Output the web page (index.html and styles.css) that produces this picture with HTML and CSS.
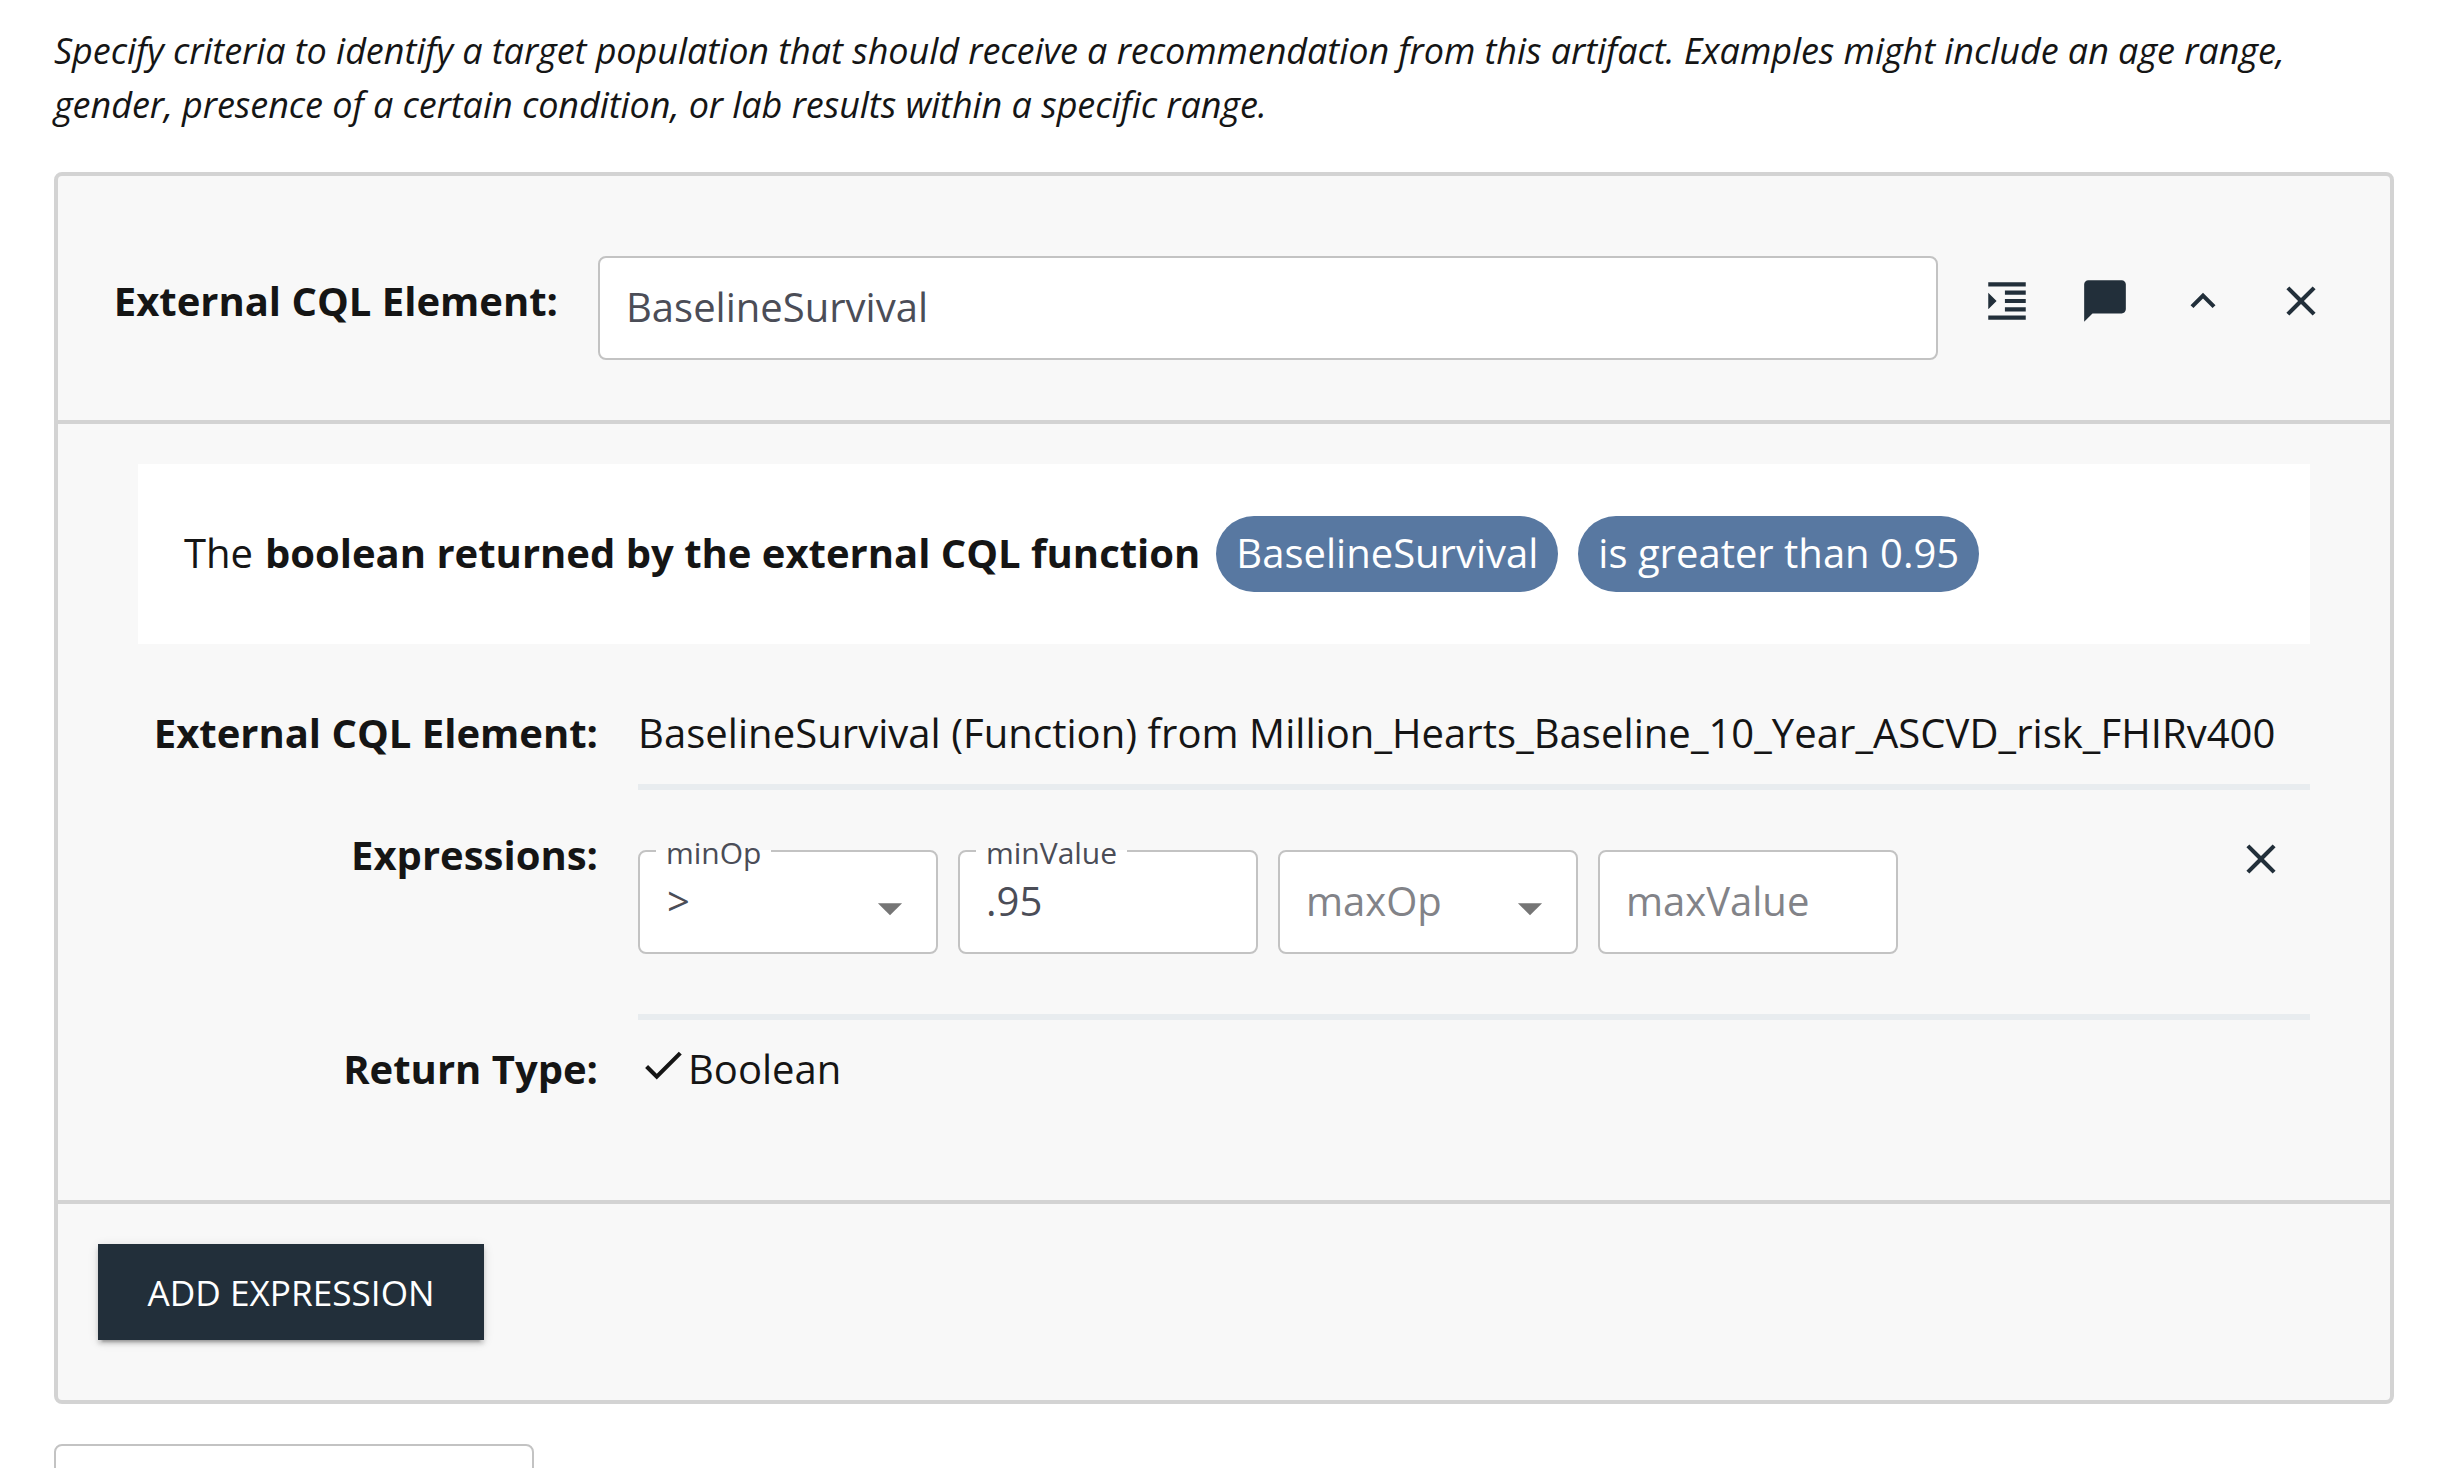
FILE: index.html
```html
<!DOCTYPE html>
<html lang="en">
<head>
<meta charset="utf-8">
<title>Inclusions</title>
<link rel="stylesheet" href="styles.css">
</head>
<body>
<main class="page">
  <p class="intro">Specify criteria to identify a target population that should receive a recommendation from this artifact. Examples might include an age range, gender, presence of a certain condition, or lab results within a specific range.</p>

  <section class="card">
    <header class="card-header">
      <div class="header-label">External CQL Element:</div>
      <div class="field name-field"><span class="value">BaselineSurvival</span></div>
      <div class="actions">
        <span class="icon-button"><svg class="icon" viewBox="0 0 24 24"><path d="M3 21h18v-2H3v2zM3 8v8l4-4-4-4zm8 9h10v-2H11v2zM3 3v2h18V3H3zm8 6h10V7H11v2zm0 4h10v-2H11v2z"/></svg></span>
        <span class="icon-button"><svg class="icon" viewBox="0 0 24 24"><path d="M20 2H4c-1.1 0-2 .9-2 2v18l4-4h14c1.1 0 2-.9 2-2V4c0-1.1-.9-2-2-2z"/></svg></span>
        <span class="icon-button"><svg class="icon" viewBox="0 0 24 24"><path d="M12 8l-6 6 1.41 1.41L12 10.83l4.59 4.58L18 14z"/></svg></span>
        <span class="icon-button"><svg class="icon" viewBox="0 0 24 24"><path d="M19 6.41L17.59 5 12 10.59 6.41 5 5 6.41 10.59 12 5 17.59 6.41 19 12 13.41 17.59 19 19 17.59 13.41 12z"/></svg></span>
      </div>
    </header>

    <div class="card-body">
      <div class="phrase">
        <span class="phrase-text">The <b>boolean returned by the external CQL function</b></span>
        <span class="pill">BaselineSurvival</span>
        <span class="pill">is greater than 0.95</span>
      </div>

      <div class="row element-row">
        <div class="row-label">External CQL Element:</div>
        <div class="row-content">BaselineSurvival (Function) from Million_Hearts_Baseline_10_Year_ASCVD_risk_FHIRv400</div>
      </div>

      <div class="row expressions-row">
        <div class="row-label">Expressions:</div>
        <div class="row-content expression">
          <div class="fields">
            <div class="field small"><span class="field-label">minOp</span><span class="value operator">&gt;</span><svg class="arrow" viewBox="0 0 24 24"><path d="M7 10l5 5 5-5z"/></svg></div>
            <div class="field small"><span class="field-label">minValue</span><span class="value">.95</span></div>
            <div class="field small"><span class="placeholder">maxOp</span><svg class="arrow" viewBox="0 0 24 24"><path d="M7 10l5 5 5-5z"/></svg></div>
            <div class="field small"><span class="placeholder">maxValue</span></div>
          </div>
          <span class="icon-button"><svg class="icon" viewBox="0 0 24 24"><path d="M19 6.41L17.59 5 12 10.59 6.41 5 5 6.41 10.59 12 5 17.59 6.41 19 12 13.41 17.59 19 19 17.59 13.41 12z"/></svg></span>
        </div>
      </div>

      <div class="row return-row">
        <div class="row-label">Return Type:</div>
        <div class="row-content return-type"><svg class="check" viewBox="0 0 24 24"><path d="M9 16.17L4.83 12l-1.42 1.41L9 19 21 7l-1.41-1.41z"/></svg>Boolean</div>
      </div>
    </div>

    <footer class="card-footer">
      <button class="add-button" type="button">ADD EXPRESSION</button>
    </footer>
  </section>

  <div class="field next-field"></div>
</main>
</body>
</html>
```
FILE: styles.css
```css
* { box-sizing: border-box; }

html, body { height: 100%; }

body {
  margin: 0;
  overflow: hidden;
  background: #fff;
  color: #151515;
  font-family: "Open Sans", "Noto Sans", sans-serif;
  font-size: 40px;
  line-height: 60px;
}

.page {
  height: 1468px;
  overflow: hidden;
  padding: 24px 54px 0;
}

.intro {
  margin: 0 0 40px;
  font-size: 36px;
  font-style: italic;
  line-height: 54px;
  letter-spacing: -0.062px;
}

.card {
  border: 4px solid #d3d3d3;
  border-radius: 8px;
  background: #f8f8f8;
}

.card-header {
  display: flex;
  height: 248px;
  padding: 80px 40px 0 0;
  border-bottom: 4px solid #d3d3d3;
}

.header-label {
  width: 500px;
  margin: 15px 40px 0 0;
  text-align: right;
  font-weight: 700;
}

.field {
  position: relative;
  border: 2px solid #c3c3c3;
  border-radius: 8px;
  background: #fff;
  color: #4b4d57;
  height: 104px;
  padding: 19px 26px;
}

.name-field { width: 1340px; }

.placeholder { color: #828388; }

.operator { margin-left: 1px; }

.actions {
  display: flex;
  margin: 20px 0 0 auto;
}

.icon-button {
  display: flex;
  justify-content: center;
  align-items: center;
  width: 98px;
  height: 50px;
}

.icon {
  width: 50px;
  height: 50px;
  fill: #222f3a;
}

.card-body {
  height: 780px;
  padding: 40px 80px 0;
  border-bottom: 4px solid #d3d3d3;
}

.phrase {
  display: flex;
  align-items: center;
  gap: 20px;
  height: 180px;
  padding: 0 46px;
  background: #fff;
}

.phrase-text {
  margin: 0 -4px 2px 0;
  line-height: 74px;
}

.phrase-text b { margin-left: 1.5px; }

.pill {
  height: 76px;
  padding: 0 20px;
  border-radius: 38px;
  background: #5878a1;
  color: #fff;
  line-height: 74px;
}

.row {
  display: grid;
  grid-template-columns: 460px 1fr;
  column-gap: 40px;
}

.row-label {
  text-align: right;
  font-weight: 700;
}

.element-row {
  height: 146px;
  padding-top: 59px;
}

.element-row .row-content { letter-spacing: 0.05px; }

.element-row .row-content,
.expressions-row .row-content {
  border-bottom: 6px solid #e8ecef;
}

.expressions-row { height: 230px; }

.expressions-row .row-label { padding-top: 35px; }

.expression {
  display: flex;
  justify-content: space-between;
  padding-top: 60px;
}

.expression .icon-button { margin-top: -16px; }

.fields {
  display: flex;
  gap: 20px;
}

.small { width: 300px; }

.field-label {
  position: absolute;
  top: -19px;
  left: 16px;
  padding: 0 10px;
  font-size: 30px;
  line-height: 40px;
  background: linear-gradient(#fff, #fff) 0 17px / 100% 2px no-repeat;
}

.arrow {
  position: absolute;
  top: 27px;
  right: 17px;
  width: 58px;
  height: 58px;
  fill: #757575;
}

.return-row { padding-top: 19px; }

.return-type { display: flex; }

.check {
  width: 50px;
  height: 50px;
  margin-top: 1px;
  fill: #151515;
}

.card-footer {
  height: 196px;
  padding: 40px;
}

.add-button {
  display: block;
  width: 386px;
  height: 96px;
  border: 0;
  padding: 1px 0 0;
  background: #222f3a;
  color: #fff;
  font: 35.2px/95px "Open Sans", "Noto Sans", sans-serif;
  box-shadow: 0 6px 2px -4px rgba(0, 0, 0, .2), 0 4px 4px 0 rgba(0, 0, 0, .14), 0 2px 10px 0 rgba(0, 0, 0, .12);
}

.next-field {
  width: 480px;
  margin-top: 40px;
}
```
